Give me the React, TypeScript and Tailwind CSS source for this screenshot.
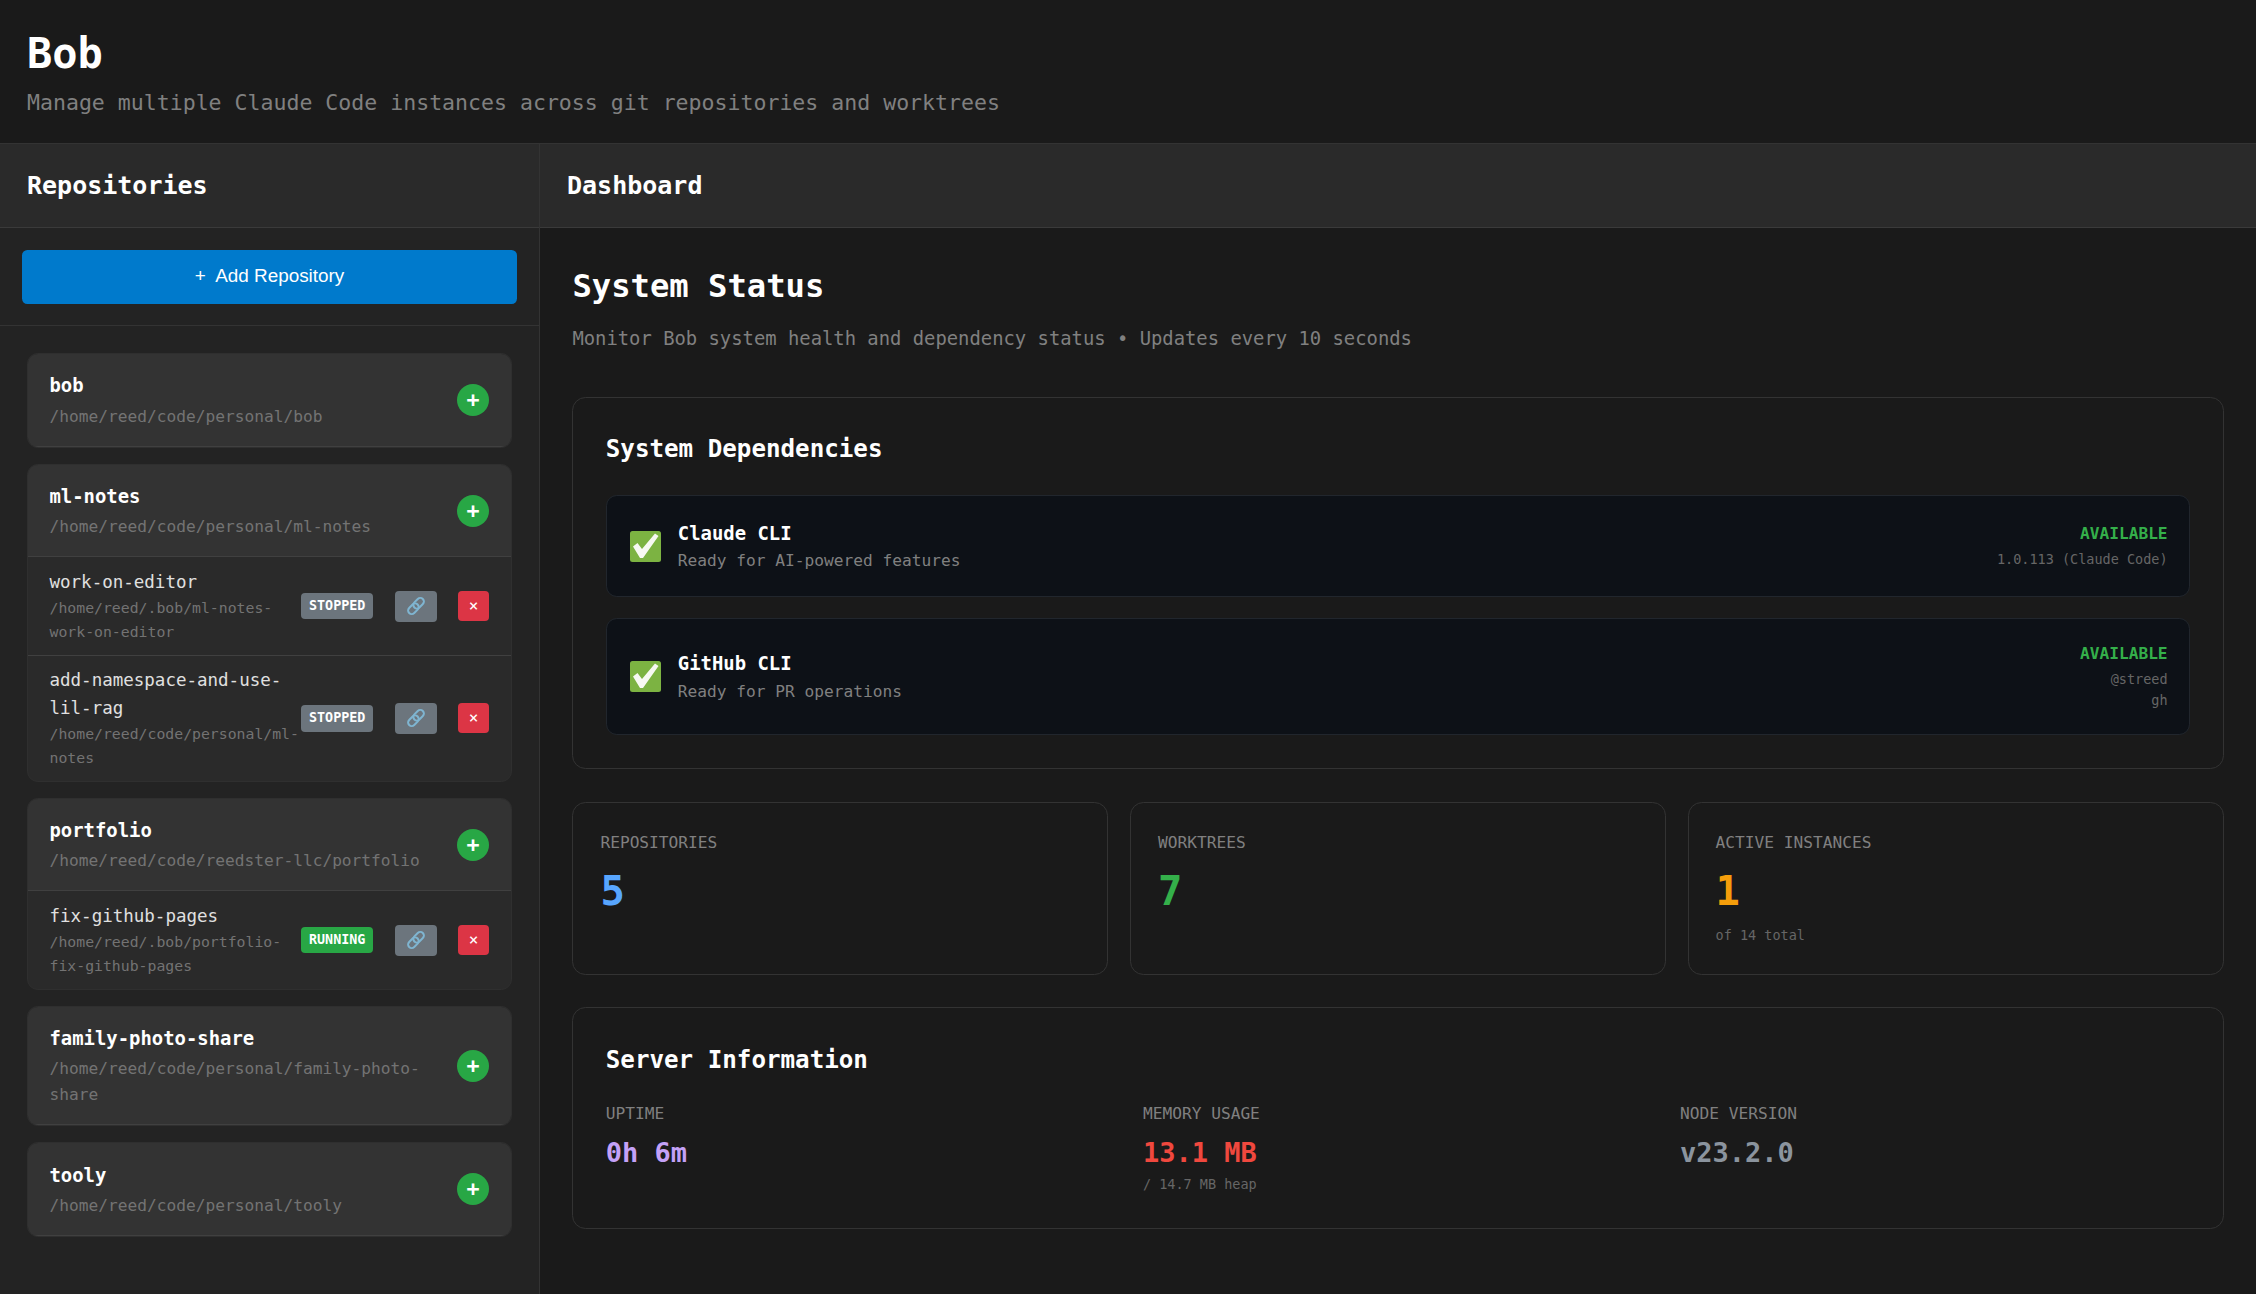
import React from "react";

type Worktree = { name: string; path: string; status: "STOPPED" | "RUNNING" };
type Repo = { name: string; path: string; worktrees: Worktree[] };

const repos: Repo[] = [
  { name: "bob", path: "/home/reed/code/personal/bob", worktrees: [] },
  {
    name: "ml-notes",
    path: "/home/reed/code/personal/ml-notes",
    worktrees: [
      { name: "work-on-editor", path: "/home/reed/.bob/ml-notes-work-on-editor", status: "STOPPED" },
      { name: "add-namespace-and-use-lil-rag", path: "/home/reed/code/personal/ml-notes", status: "STOPPED" },
    ],
  },
  {
    name: "portfolio",
    path: "/home/reed/code/reedster-llc/portfolio",
    worktrees: [
      { name: "fix-github-pages", path: "/home/reed/.bob/portfolio-fix-github-pages", status: "RUNNING" },
    ],
  },
  { name: "family-photo-share", path: "/home/reed/code/personal/family-photo-share", worktrees: [] },
  { name: "tooly", path: "/home/reed/code/personal/tooly", worktrees: [] },
];

function LinkIcon() {
  return (
    <svg width="20" height="20" viewBox="0 0 20 20" fill="none" stroke="#7fb5d1" strokeWidth="2">
      <rect x="9" y="1.2" width="7.2" height="12" rx="3.6" transform="rotate(45 12.6 7.2)" />
      <rect x="3.8" y="6.8" width="7.2" height="12" rx="3.6" transform="rotate(45 7.4 12.8)" />
    </svg>
  );
}

function CheckIcon() {
  return (
    <svg width="31" height="31" viewBox="0 0 31 31" className="shrink-0">
      <rect x="0" y="0" width="31" height="31" rx="2.5" fill="#7cb342" />
      <path d="M3 15.5 L7.5 12 L12 18 L25 2.5 L28.5 5 L13 27 L10 27 Z" fill="#f7f9f2" />
    </svg>
  );
}

function RepoCard({ repo }: { repo: Repo }) {
  return (
    <div className="rounded-[10.8px] border border-[#2f2f2f] bg-[#2a2a2a] overflow-hidden">
      <div className="flex items-center justify-between bg-[#333333] pl-[21.5px] pr-[22px] py-[16.2px] border-b border-[#404040]">
        <div className="min-w-0 flex-1 pr-[16px]">
          <div className="text-[18.9px] font-bold text-white mb-[3px]">{repo.name}</div>
          <div className="text-[16.2px] text-[#737373]">{repo.path}</div>
        </div>
        <button className="flex h-[32px] w-[32px] shrink-0 items-center justify-center rounded-full bg-[#28a745] text-[21.6px] font-bold leading-none text-white">
          +
        </button>
      </div>
      {repo.worktrees.map((wt) => (
        <div
          key={wt.name}
          className="flex items-center border-b border-[#404040] last:border-b-0 pl-[21.5px] pr-[22px] py-[10.9px]"
        >
          <div className="min-w-0 flex-1">
            <div className="text-[17.5px] text-[#e0e0e0]">{wt.name}</div>
            <div className="text-[14.8px] text-[#737373]">{wt.path}</div>
          </div>
          <div className="flex shrink-0 items-center gap-[21px]">
            <span
              className={
                (wt.status === "RUNNING" ? "bg-[#28a745]" : "bg-[#6c757d]") +
                " mr-[0.6px] rounded-[4px] px-[8px] py-[2.7px] text-[13.4px] font-bold text-white"
              }
            >
              {wt.status}
            </span>
            <button className="flex h-[31px] w-[42px] items-center justify-center rounded-[4px] bg-[#6c757d]">
              <LinkIcon />
            </button>
            <button className="flex h-[30px] w-[31px] items-center justify-center rounded-[4px] bg-[#dc3545] text-[16px] leading-none text-white">
              ×
            </button>
          </div>
        </div>
      ))}
    </div>
  );
}

function DepRow({
  name,
  desc,
  details,
}: {
  name: string;
  desc: string;
  details: string[];
}) {
  return (
    <div className="flex items-center justify-between rounded-[10.8px] border border-[#21262d] bg-[#0d1117] pl-[23px] pr-[21.6px] py-[21.6px]">
      <div className="flex items-center gap-[17px]">
        <CheckIcon />
        <div>
          <div className="text-[18.9px] font-bold text-white">{name}</div>
          <div className="text-[16.2px] text-[#808080]">{desc}</div>
        </div>
      </div>
      <div className="text-right">
        <div className="mb-[2px] text-[16.2px] font-bold text-[#34b04a]">AVAILABLE</div>
        {details.map((d) => (
          <div key={d} className="text-[13.5px] text-[#666666]">
            {d}
          </div>
        ))}
      </div>
    </div>
  );
}

function StatCard({
  label,
  value,
  color,
  sub,
}: {
  label: string;
  value: string;
  color: string;
  sub?: string;
}) {
  return (
    <div className="rounded-[13.5px] border border-[#333333] px-[27px] pt-[27px] pb-[28px]">
      <div className="mb-[3px] text-[16.2px] text-[#808080]">{label}</div>
      <div className={color + " text-[40.5px] font-bold"}>{value}</div>
      <div className="mt-[1.4px] h-[21.6px] text-[13.5px] text-[#666666]">{sub}</div>
    </div>
  );
}

function InfoCol({
  label,
  value,
  color,
  sub,
}: {
  label: string;
  value: string;
  color: string;
  sub?: string;
}) {
  return (
    <div>
      <div className="mb-[4px] text-[16.2px] text-[#808080]">{label}</div>
      <div className={color + " text-[27px] font-bold"}>{value}</div>
      {sub && <div className="text-[13.5px] text-[#666666]">{sub}</div>}
    </div>
  );
}

export default function App() {
  return (
    <div className="flex h-screen flex-col overflow-hidden bg-[#1a1a1a] font-['DejaVu_Sans_Mono',monospace] leading-[1.6] text-white">
      <header className="h-[144px] shrink-0 border-b border-[#333333] px-[27px] pt-[21.6px]">
        <h1 className="text-[42px] font-bold leading-[64.8px]">Bob</h1>
        <p className="text-[21.55px] text-[#808080]">
          Manage multiple Claude Code instances across git repositories and worktrees
        </p>
      </header>

      <div className="flex min-h-0 flex-1">
        <aside className="flex w-[540px] shrink-0 flex-col border-r border-[#333333] bg-[#232323]">
          <div className="flex h-[84px] shrink-0 items-center border-b border-[#3a3a3a] bg-[#2a2a2a] px-[27px]">
            <h2 className="text-[25px] font-bold">Repositories</h2>
          </div>
          <div className="border-b border-[#333333] p-[21.6px]">
            <button className="h-[54px] w-full rounded-[5.4px] bg-[#007acc] font-['Liberation_Sans',sans-serif] text-[18.9px] text-white">
              +&nbsp; Add Repository
            </button>
          </div>
          <div className="flex flex-col gap-[16.2px] p-[27px]">
            {repos.map((r) => (
              <RepoCard key={r.name} repo={r} />
            ))}
          </div>
        </aside>

        <main className="min-w-0 flex-1">
          <div className="flex h-[84px] items-center border-b border-[#3a3a3a] bg-[#2a2a2a] px-[27px]">
            <h2 className="text-[25px] font-bold">Dashboard</h2>
          </div>
          <div className="px-[32.4px] pt-[33.4px]">
            <h2 className="mb-[10.8px] text-[32.2px] font-bold leading-[51.8px]">System Status</h2>
            <p className="mb-[43.2px] text-[18.85px] text-[#808080]">
              Monitor Bob system health and dependency status • Updates every 10 seconds
            </p>

            <section className="mb-[33px] rounded-[13.5px] border border-[#333333] px-[32.4px] pt-[31.4px] pb-[33px]">
              <h3 className="mb-[27px] text-[24.2px] font-bold">System Dependencies</h3>
              <div className="flex flex-col gap-[21.6px]">
                <DepRow name="Claude CLI" desc="Ready for AI-powered features" details={["1.0.113 (Claude Code)"]} />
                <DepRow name="GitHub CLI" desc="Ready for PR operations" details={["@streed", "gh"]} />
              </div>
            </section>

            <div className="mb-[32px] grid grid-cols-3 gap-[21.6px]">
              <StatCard label="REPOSITORIES" value="5" color="text-[#58a6ff]" />
              <StatCard label="WORKTREES" value="7" color="text-[#34b04a]" />
              <StatCard label="ACTIVE INSTANCES" value="1" color="text-[#f59e0b]" sub="of 14 total" />
            </div>

            <section className="rounded-[13.5px] border border-[#333333] p-[32.4px]">
              <h3 className="mb-[21.6px] text-[24.2px] font-bold">Server Information</h3>
              <div className="grid grid-cols-3 gap-[27px]">
                <InfoCol label="UPTIME" value="0h 6m" color="text-[#c4a1f7]" />
                <InfoCol label="MEMORY USAGE" value="13.1 MB" color="text-[#f0483e]" sub="/ 14.7 MB heap" />
                <InfoCol label="NODE VERSION" value="v23.2.0" color="text-[#8b949e]" />
              </div>
            </section>
          </div>
        </main>
      </div>
    </div>
  );
}
